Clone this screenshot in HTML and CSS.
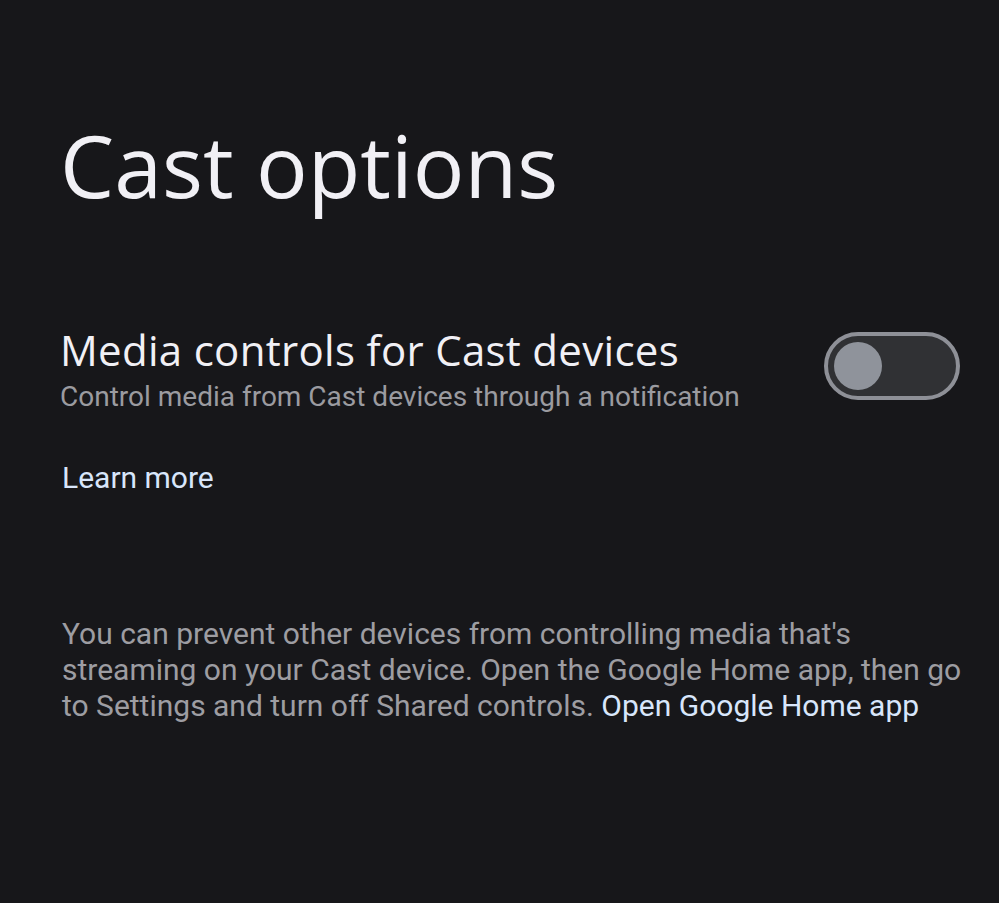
FILE: index.html
```html
<!DOCTYPE html>
<html lang="en">
<head>
  <meta charset="UTF-8" />
  <meta name="viewport" content="width=device-width, initial-scale=1.0"/>
  <title>Cast options</title>
  <link rel="stylesheet" href="styles.css">
</head>
<body>
  <div class="page">
    <h1 class="title">Cast options</h1>

    <div class="setting">
      <div class="setting-text">
        <div class="setting-name">Media controls for Cast devices</div>
        <div class="setting-desc">Control media from Cast devices through a notification</div>
      </div>
      <div class="switch"><div class="thumb"></div></div>
    </div>

    <a class="learn" href="#">Learn more</a>

    <p class="footer">
      You can prevent other devices from controlling media that's<br>
      streaming on your Cast device. Open the Google Home app, then go<br>
      to Settings and turn off Shared controls. <a href="#">Open Google Home app</a>
    </p>
  </div>
</body>
</html>
```

FILE: styles.css
```css
body {
  margin: 0;
  background-color: #17171a;
  font-family: Roboto, "Noto Sans", sans-serif;
}
.page {
  padding: 110px 20px 0 60px;
}
.title {
  margin: 0;
  font-family: "Open Sans", sans-serif;
  font-weight: 400;
  font-size: 86px;
  line-height: 110px;
  color: #f1f0f5;
}
.setting {
  display: flex;
  align-items: flex-start;
  justify-content: space-between;
  margin-top: 101px;
  padding-right: 19px;
}
.setting-name {
  font-family: "Open Sans", sans-serif;
  font-size: 42px;
  line-height: 58px;
  color: #f1f0f5;
  letter-spacing: 0.3px;
}
.setting-desc {
  font-size: 28px;
  line-height: 36px;
  color: #9b9ba0;
}
.switch {
  box-sizing: border-box;
  width: 136px;
  height: 68px;
  border: 4px solid #8e9097;
  border-radius: 34px;
  background: #303134;
  padding: 6px 6px;
  margin-top: 11px;
}
.thumb {
  width: 48px;
  height: 48px;
  border-radius: 50%;
  background: #8f939b;
}
.learn {
  display: inline-block;
  margin-top: 45px;
  font-size: 30px;
  line-height: 36px;
  color: #d8e6fb;
  text-decoration: none;
  padding-left: 2px;
}
.footer {
  margin: 120px 0 0 2px;
  font-size: 30px;
  line-height: 36px;
  color: #9d9da2;
}
.footer a {
  color: #d8e6fb;
  text-decoration: none;
}
```
